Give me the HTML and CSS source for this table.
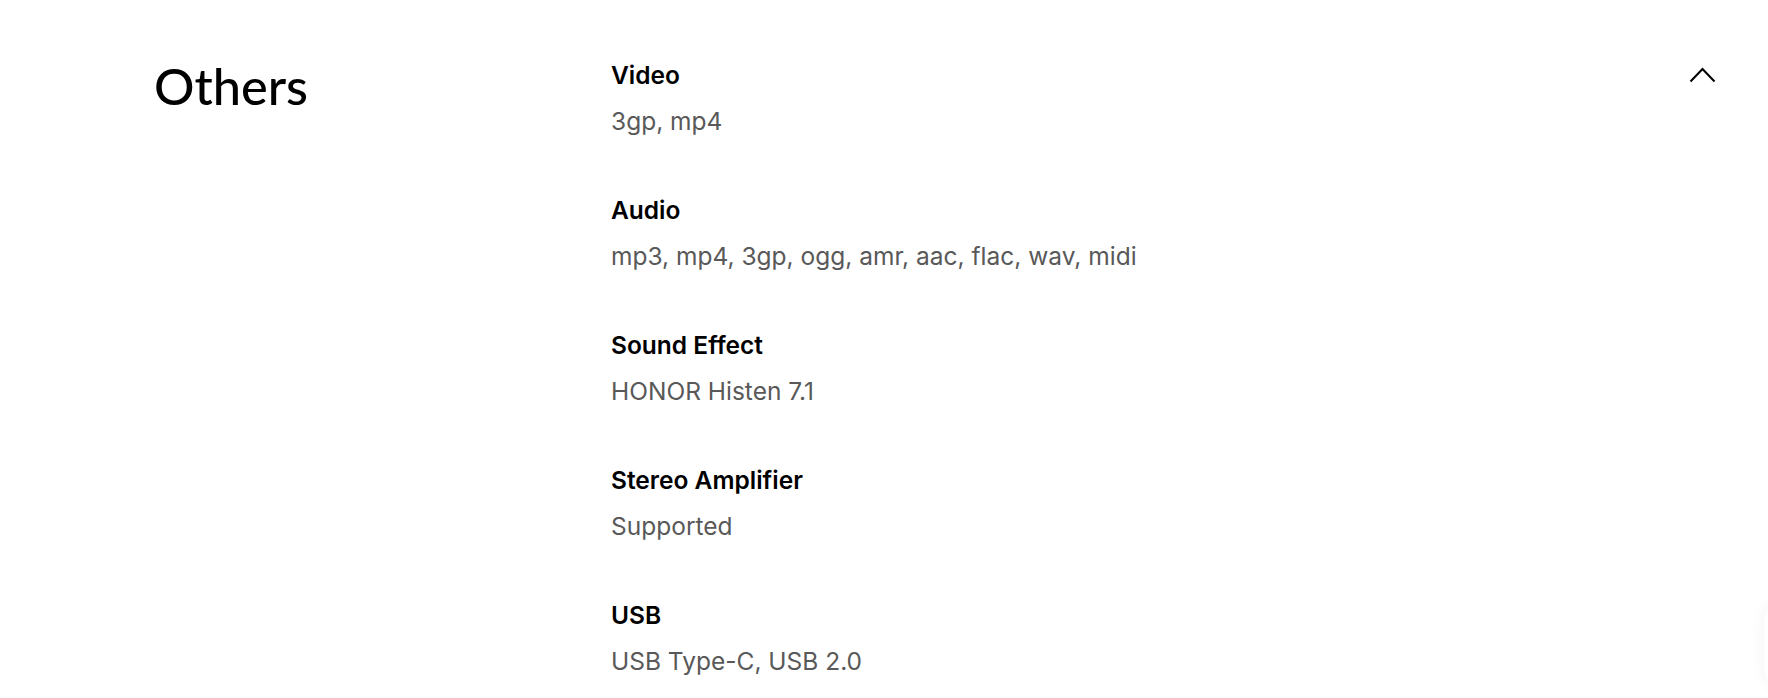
FILE: index.html
```html
<!DOCTYPE html>
<html lang="en">
<head>
<meta charset="utf-8">
<title>Others</title>
<link rel="stylesheet" href="styles.css">
</head>
<body>
<section class="spec">
  <h2 class="spec-title">Others</h2>
  <dl class="spec-list">
    <div class="spec-item">
      <dt class="spec-label">Video</dt>
      <dd class="spec-value">3gp, mp4</dd>
    </div>
    <div class="spec-item">
      <dt class="spec-label">Audio</dt>
      <dd class="spec-value">mp3, mp4, 3gp, ogg, amr, aac, flac, wav, midi</dd>
    </div>
    <div class="spec-item">
      <dt class="spec-label">Sound Effect</dt>
      <dd class="spec-value">HONOR Histen 7.1</dd>
    </div>
    <div class="spec-item">
      <dt class="spec-label">Stereo Amplifier</dt>
      <dd class="spec-value">Supported</dd>
    </div>
    <div class="spec-item">
      <dt class="spec-label">USB</dt>
      <dd class="spec-value">USB Type-C, USB 2.0</dd>
    </div>
  </dl>
  <button class="toggle" aria-label="Collapse">
    <svg width="27" height="17" viewBox="0 0 27 17"><path d="M1.5 15.5 L13.5 3 L25.5 15.5" fill="none" stroke="#000" stroke-width="2"/></svg>
  </button>
</section>
<div class="float-shadow"></div>
</body>
</html>
```
FILE: styles.css
```css
html, body {
  margin: 0;
  padding: 0;
  background: #fff;
  overflow: hidden;
}
body {
  font-family: Inter, "Noto Sans", sans-serif;
  color: #000;
  width: 1768px;
  height: 698px;
  position: relative;
}
.spec {
  display: grid;
  grid-template-columns: 457px 1fr auto;
  padding: 0 52px 0 154px;
  height: 698px;
  box-sizing: border-box;
  overflow: hidden;
}
.spec-title {
  margin: 58px 0 0;
  font-family: Lato, Inter, sans-serif;
  font-weight: 500;
  font-size: 50.5px;
  line-height: 56px;
  letter-spacing: 0;
}
.spec-list {
  margin: 0;
  padding-top: 59px;
}
.spec-item {
  height: 135px;
}
.spec-item:last-child {
  height: auto;
}
.spec-label {
  font-weight: 600;
  font-size: 24.5px;
  line-height: 32px;
  margin: 0;
}
.spec-value {
  margin: 14px 0 0;
  font-size: 24.5px;
  line-height: 32px;
  color: #595959;
}
.toggle {
  margin-top: 66px;
  align-self: start;
  background: none;
  border: 0;
  padding: 0;
  width: 27px;
  height: 17px;
  display: flex;
}
.float-shadow {
  position: absolute;
  right: -40px;
  top: 600px;
  width: 44px;
  height: 90px;
  border-radius: 22px;
  box-shadow: 0 0 16px rgba(0,0,0,0.05);
}
```
